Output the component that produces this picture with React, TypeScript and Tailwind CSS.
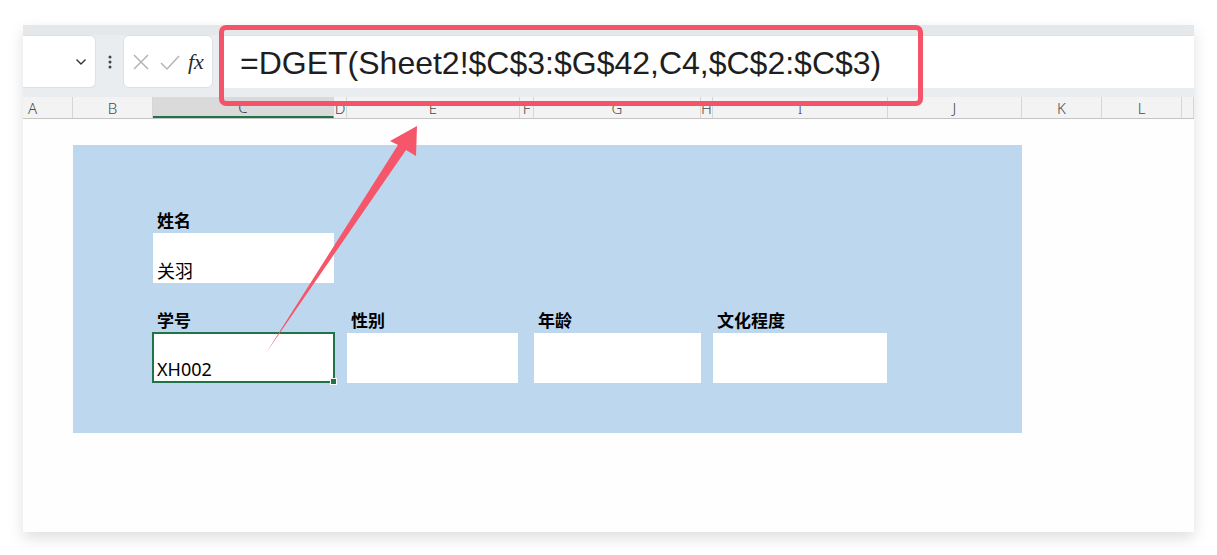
import React from "react";

const cols: { l: string; w: number; sel?: boolean; left?: boolean }[] = [
  { l: "A", w: 50, left: true },
  { l: "B", w: 80 },
  { l: "C", w: 181, sel: true },
  { l: "D", w: 13 },
  { l: "E", w: 173 },
  { l: "F", w: 14 },
  { l: "G", w: 167 },
  { l: "H", w: 12 },
  { l: "I", w: 175 },
  { l: "J", w: 134 },
  { l: "K", w: 80 },
  { l: "L", w: 80 },
  { l: "", w: 12 },
];

const cjk = { fontFamily: '"Noto Sans CJK SC", "Noto Sans", sans-serif' };

export default function App() {
  return (
    <div className="relative w-[1217px] h-[555px] bg-white overflow-hidden">
      <div className="ml-[23px] mt-[25px] w-[1171px] h-[507px] bg-[#fefefe] shadow-[0_6px_14px_rgba(0,0,0,0.13)] flex flex-col overflow-hidden">
        {/* top strip */}
        <div className="h-[10px] bg-[#e4e8eb]" />
        {/* formula bar */}
        <div className="h-[53px] bg-[#e9edf0] flex">
          <div className="w-[73px] h-[53px] bg-white rounded-r-[6px] border border-l-0 border-[#dde1e4] flex items-center justify-end pr-[8px]">
            <svg width="12" height="8" viewBox="0 0 12 8">
              <path d="M1.5 1.5 L6 6 L10.5 1.5" stroke="#333" strokeWidth="1.4" fill="none" />
            </svg>
          </div>
          <div className="w-[27px] flex items-center justify-center">
            <svg width="4" height="14" viewBox="0 0 4 14">
              <circle cx="2" cy="2" r="1.5" fill="#444" />
              <circle cx="2" cy="7" r="1.5" fill="#444" />
              <circle cx="2" cy="12" r="1.5" fill="#444" />
            </svg>
          </div>
          <div className="w-[90px] h-[53px] bg-white rounded-[6px] border border-[#dde1e4] flex items-center pl-[6px]">
            <svg width="20" height="20" viewBox="0 0 20 20" className="ml-[1px]">
              <path d="M3 3 L17 17 M17 3 L3 17" stroke="#b4b4b4" strokeWidth="1.5" fill="none" />
            </svg>
            <svg width="22" height="20" viewBox="0 0 22 20" className="ml-[8px]">
              <path d="M2 11 L8 17 L20 4" stroke="#b4b4b4" strokeWidth="1.5" fill="none" />
            </svg>
            <span
              className="ml-[7px] text-[22px] italic text-[#2a2a2a] leading-none"
              style={{ fontFamily: '"Liberation Serif", serif' }}
            >
              fx
            </span>
          </div>
          <div className="w-[9px]" />
          <div className="flex-1 h-[53px] bg-white border-t border-[#dfe3e6] flex items-center pl-[18px] pt-[1px]">
            <span
              className="text-[32px] text-[#1e1e1e] leading-none whitespace-nowrap"
              style={{ fontFamily: '"Liberation Sans", Arial, sans-serif' }}
            >
              =DGET(Sheet2!$C$3:$G$42,C4,$C$2:$C$3)
            </span>
          </div>
        </div>
        <div className="h-[9px] bg-[#e9edf0]" />
        {/* column header */}
        <div className="h-[22px] bg-[#f3f3f3] border-b border-[#c4c4c4] flex">
          {cols.map((c, i) => (
            <div
              key={i}
              style={{ width: c.w, fontFamily: '"Noto Sans", sans-serif' }}
              className={
                "shrink-0 flex items-center pt-[1px] text-[15px] leading-[16px] overflow-hidden border-r border-[#d6d6d6] font-light " +
                (c.left ? "justify-start pl-[5px] " : "justify-center ") +
                (c.sel
                  ? "bg-[#dadada] border-b-2 border-b-[#21734a] text-[#3a3a3a]"
                  : "text-[#4a4a4a]")
              }
            >
              {c.l}
            </div>
          ))}
        </div>
        {/* grid body */}
        <div className="flex-1 pt-[26px] pl-[50px]">
          <div className="w-[949px] h-[288px] bg-[#bdd7ee] pl-[80px] pt-[62px]" style={cjk}>
            <div className="h-[26px] flex items-end pb-[5px] pl-[4px] text-[17px] font-bold text-black leading-none">
              姓名
            </div>
            <div className="w-[181px] h-[50px] bg-white flex items-end pl-[4px] pb-[4px] text-[18px] text-black leading-none">
              关羽
            </div>
            <div className="h-[50px] flex items-end pb-[5px] text-[17px] font-bold text-black leading-none">
              <div className="w-[194px] pl-[4px]">学号</div>
              <div className="w-[187px] pl-[4px]">性别</div>
              <div className="w-[179px] pl-[4px]">年龄</div>
              <div className="pl-[4px]">文化程度</div>
            </div>
            <div className="h-[50px] flex">
              <div className="relative -ml-[1px] w-[183px] h-[51px] -mt-[1px] bg-white border-2 border-[#21734a] flex items-end pl-[3px] pb-[3px] text-[18px] text-black leading-none" style={{ fontFamily: '"Noto Sans", sans-serif' }}>
                XH002
                <div className="absolute -right-[4px] -bottom-[4px] w-[7px] h-[7px] bg-[#21734a] border border-white" />
              </div>
              <div className="ml-[12px] w-[171px] h-[50px] bg-white" />
              <div className="ml-[16px] w-[167px] h-[50px] bg-white" />
              <div className="ml-[12px] w-[174px] h-[50px] bg-white" />
            </div>
          </div>
        </div>
      </div>

      {/* red highlight box */}
      <div className="absolute left-[219px] top-[25px] w-[704px] h-[81px] border-[5px] border-[#f3546a] rounded-[7px]" />

      {/* arrow */}
      <svg className="absolute left-0 top-0 pointer-events-none" width="1217" height="555" viewBox="0 0 1217 555">
        <polygon
          points="417,126 416,156 406,150 266,353 398,145 390,141"
          fill="#f5566a"
        />
      </svg>
    </div>
  );
}
